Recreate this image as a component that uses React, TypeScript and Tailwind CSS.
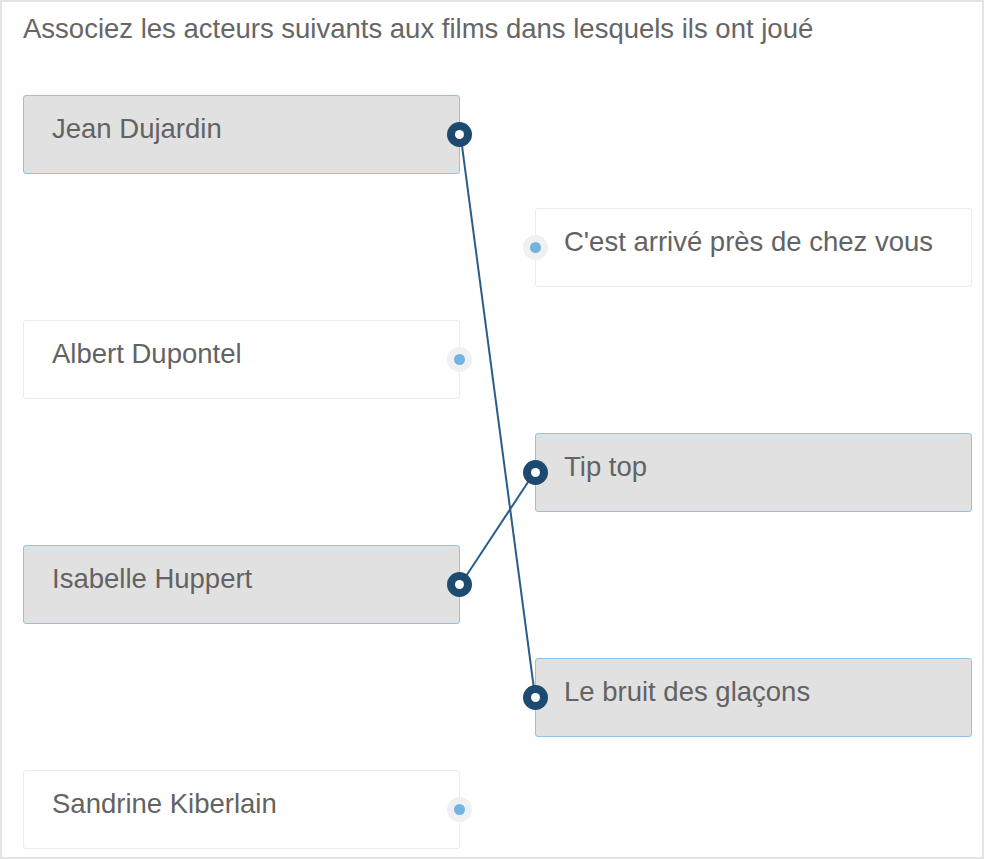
import React from "react";

type Item = { side: "L" | "R"; text: string; selected: boolean };

const items: Item[] = [
  { side: "L", text: "Jean Dujardin", selected: true },
  { side: "R", text: "C'est arrivé près de chez vous", selected: false },
  { side: "L", text: "Albert Dupontel", selected: false },
  { side: "R", text: "Tip top", selected: true },
  { side: "L", text: "Isabelle Huppert", selected: true },
  { side: "R", text: "Le bruit des glaçons", selected: true },
  { side: "L", text: "Sandrine Kiberlain", selected: false },
];

function Dot({ selected, side }: { selected: boolean; side: "L" | "R" }) {
  const pos = side === "L" ? "right-[-13px] top-[26px]" : "left-[-13px] top-[26px]";
  if (selected) {
    return (
      <div
        className={`absolute ${pos} z-20 w-[25px] h-[25px] rounded-full bg-[#1f4a70] flex items-center justify-center`}
      >
        <div className="w-[9px] h-[9px] rounded-full bg-white" />
      </div>
    );
  }
  return (
    <div
      className={`absolute ${pos} z-20 w-[25px] h-[25px] rounded-full bg-[#eef0f2] flex items-center justify-center`}
    >
      <div className="w-[11px] h-[11px] rounded-full bg-[#72b3e0]" />
    </div>
  );
}

function Box({ item }: { item: Item }) {
  const cls = item.selected
    ? "relative w-[437px] h-[79px] rounded-[3px] border border-solid border-[#8cc3e8] bg-[#e1e1e1] pl-[28px] pt-[17px] text-[27.5px] leading-[32px] text-[#636363]"
    : "relative w-[437px] h-[79px] rounded-[3px] border border-solid border-[#ececec] bg-white pl-[28px] pt-[17px] text-[27.5px] leading-[32px] text-[#636363]";
  return (
    <div className={cls}>
      {item.text}
      <Dot selected={item.selected} side={item.side} />
    </div>
  );
}

export default function App() {
  return (
    <div
      className="w-[984px] h-[859px] bg-white border-2 border-[#e3e3e3] pl-[21px] pr-[10px] pt-[11px]"
      style={{ fontFamily: '"Liberation Sans", Arial, sans-serif' }}
    >
      <div className="text-[27.5px] leading-[32px] text-[#666666]">
        Associez les acteurs suivants aux films dans lesquels ils ont joué
      </div>
      <div className="relative mt-[50px] flex flex-col gap-[33.5px]">
        {items.map((it, i) => (
          <div key={i} className={`flex ${it.side === "L" ? "justify-start" : "justify-end"}`}>
            <Box item={it} />
          </div>
        ))}
        <svg
          className="absolute left-[437px] top-0 z-10 pointer-events-none"
          width="76"
          height="640"
          viewBox="437 0 76 640"
        >
          <line x1="437.5" y1="39.5" x2="512" y2="601.5" stroke="#2b5d8a" strokeWidth="2" />
          <line x1="437.5" y1="489.5" x2="512" y2="376.5" stroke="#2b5d8a" strokeWidth="2" />
        </svg>
      </div>
    </div>
  );
}
